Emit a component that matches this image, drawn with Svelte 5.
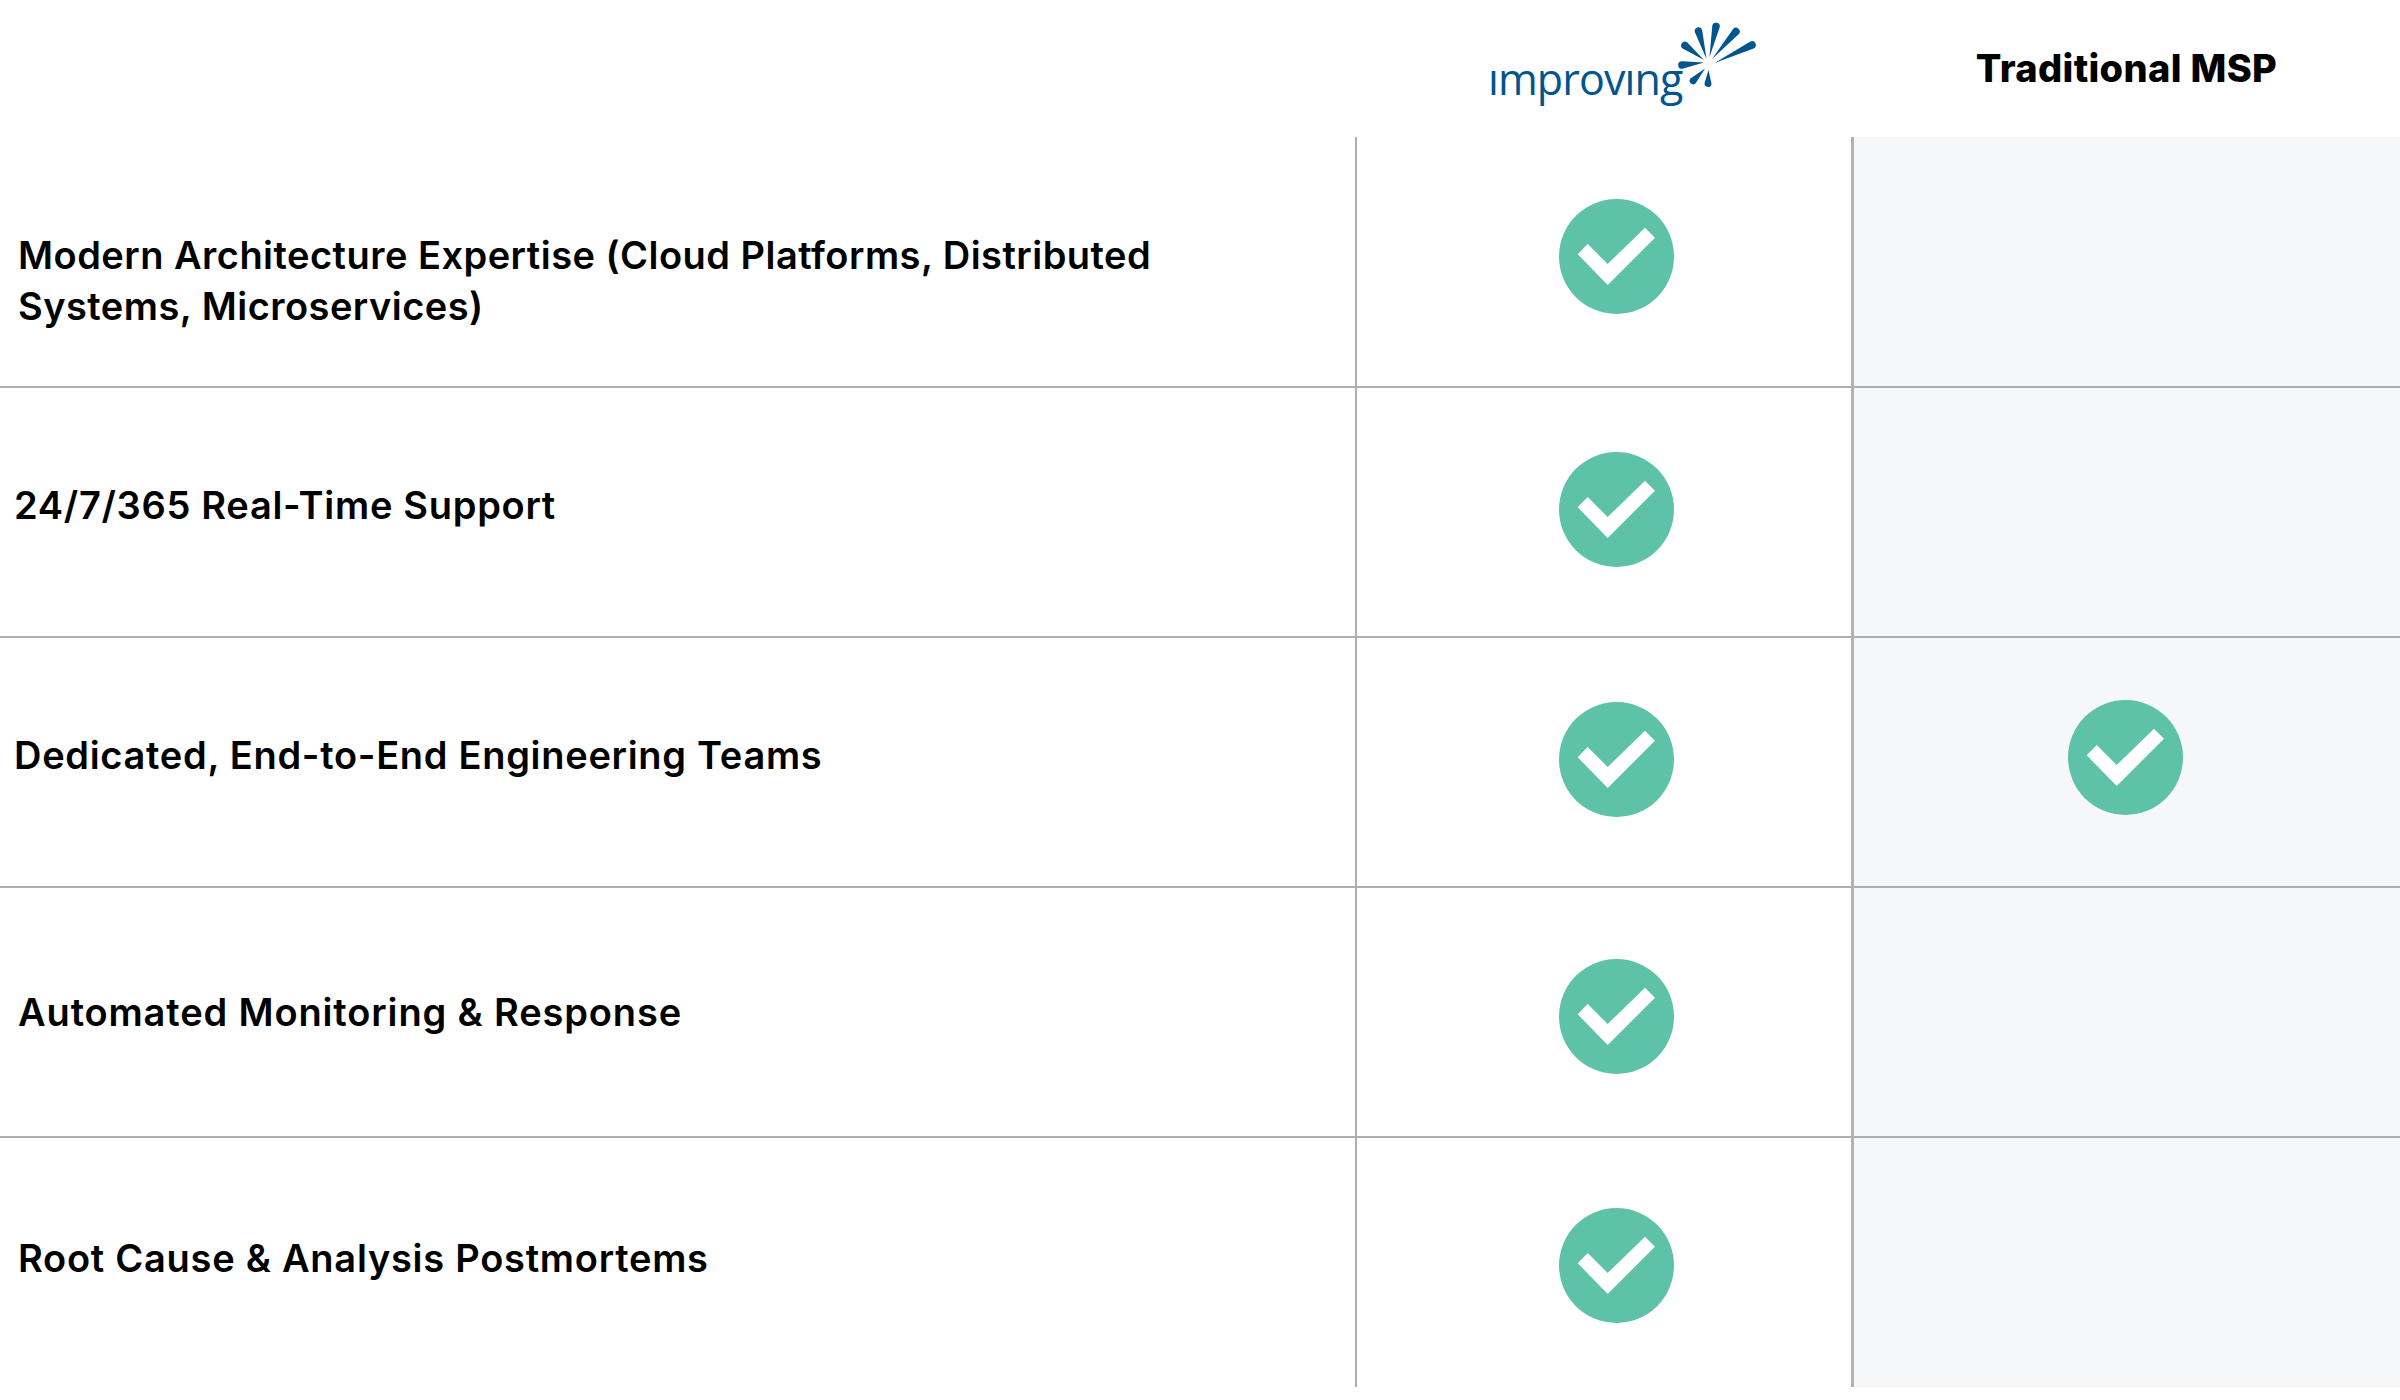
<script>
  const rows = [
    { label: 'Modern Architecture Expertise (Cloud Platforms, Distributed Systems, Microservices)', cls: 'r1', msp: false },
    { label: '24/7/365 Real-Time Support', cls: 'r2', msp: false },
    { label: 'Dedicated, End-to-End Engineering Teams', cls: 'r3', msp: true },
    { label: 'Automated Monitoring & Response', cls: 'r4', msp: false },
    { label: 'Root Cause & Analysis Postmortems', cls: 'r5', msp: false }
  ];

  const rays = [
    [166.5, 49, 158.5, 21, 3.8],
    [169.5, 47, 176, 16.5, 3.8],
    [172, 49, 196, 21.5, 3.8],
    [174.5, 53, 212, 35, 3.8],
    [164, 50, 145, 35.5, 3.8],
    [164, 52.5, 142, 55, 3.8],
    [165, 58.5, 153, 71, 3.5],
    [168.5, 60, 168, 73.5, 3.5]
  ];

  function rayPath([x1, y1, x2, y2, r]) {
    const dx = x2 - x1;
    const dy = y2 - y1;
    const len = Math.hypot(dx, dy);
    const nx = (-dy / len) * r;
    const ny = (dx / len) * r;
    const a = `${(x2 + nx).toFixed(2)} ${(y2 + ny).toFixed(2)}`;
    const b = `${(x2 - nx).toFixed(2)} ${(y2 - ny).toFixed(2)}`;
    return `M${x1} ${y1}L${a}A${r} ${r} 0 0 0 ${b}Z`;
  }
</script>

{#snippet check()}
  <svg class="check" viewBox="0 0 115 115" aria-hidden="true">
    <circle cx="57.5" cy="57.5" r="57.5" fill="#5dc2a8" />
    <polygon points="18.7,55.3 28.7,45 48.7,65 86,28.7 96,38.7 48.7,86" fill="#fff" />
  </svg>
{/snippet}

<div class="table">
  <div class="head"></div>
  <div class="head logo-cell">
    <div class="logo">
      <span class="wordmark">ımprovıng</span>
      <svg class="rays" viewBox="0 0 240 110" aria-hidden="true">
        {#each rays as ray}
          <path d={rayPath(ray)} fill="#00558f" />
        {/each}
      </svg>
    </div>
  </div>
  <div class="head msp-head">Traditional MSP</div>

  {#each rows as row, i}
    <div class="cell feature {row.cls}" class:last={i === rows.length - 1}>
      <p>{row.label}</p>
    </div>
    <div class="cell ours {row.cls}" class:last={i === rows.length - 1}>
      {@render check()}
    </div>
    <div class="cell theirs {row.cls}" class:last={i === rows.length - 1}>
      {#if row.msp}{@render check()}{/if}
    </div>
  {/each}
</div>

<style>
  :global(body) {
    margin: 0;
    background: #fff;
  }

  .table {
    display: grid;
    width: 2400px;
    grid-template-columns: 1357px 497px 546px;
    grid-template-rows: 137px 251px 250px 250px 250px 249px;
    font-family: Inter, "Noto Sans", sans-serif;
    color: #000;
  }

  .head {
    display: flex;
    align-items: center;
    justify-content: center;
  }

  .msp-head {
    padding: 0 1px 2px 0;
    font-size: 38px;
    font-weight: 800;
    letter-spacing: 0.35px;
    box-sizing: border-box;
  }

  .logo-cell {
    justify-content: flex-start;
    padding-left: 135px;
    align-items: flex-start;
  }

  .logo {
    position: relative;
    width: 288px;
    height: 137px;
  }

  .wordmark {
    display: block;
    padding-top: 49px;
    margin-left: -4px;
    font-family: "Open Sans", sans-serif;
    font-size: 43px;
    line-height: 60px;
    font-weight: 400;
    color: #00558f;
    letter-spacing: -0.9px;
  }

  .rays {
    position: absolute;
    left: 48px;
    top: 10px;
    width: 240px;
    height: 110px;
  }

  .cell {
    box-sizing: border-box;
    border-bottom: 2px solid #aeaeae;
  }

  .cell.last {
    border-bottom: 0;
  }

  .feature {
    border-right: 2px solid #aeaeae;
  }

  .feature p {
    margin: 0;
    max-width: 1180px;
    font-size: 38px;
    line-height: 51px;
    font-weight: 600;
    letter-spacing: 0.47px;
  }

  .ours,
  .theirs {
    display: flex;
    justify-content: center;
    align-items: flex-start;
  }

  .ours {
    border-right: 3px solid #b2b2b2;
    padding-left: 24px;
  }

  .theirs {
    background: #f6f7f9;
    padding-right: 4px;
  }

  .check {
    display: block;
    width: 115px;
    height: 115px;
  }

  .feature.r1 { padding: 93px 0 0 18px; }
  .feature.r2 { padding: 92px 0 0 14px; }
  .feature.r3 { padding: 92px 0 0 14px; }
  .feature.r4 { padding: 99px 0 0 18px; }
  .feature.r5 { padding: 95px 0 0 18px; }

  .feature.r2 p { letter-spacing: 0.7px; }
  .feature.r3 p { letter-spacing: 0.7px; }
  .feature.r4 p { letter-spacing: 0.86px; }
  .feature.r5 p { letter-spacing: 0.74px; }

  .ours.r1 { padding-top: 62px; }
  .ours.r2 { padding-top: 64px; }
  .ours.r3 { padding-top: 64px; }
  .ours.r4 { padding-top: 71px; }
  .ours.r5 { padding-top: 70px; }

  .theirs.r3 { padding-top: 62px; }
</style>
